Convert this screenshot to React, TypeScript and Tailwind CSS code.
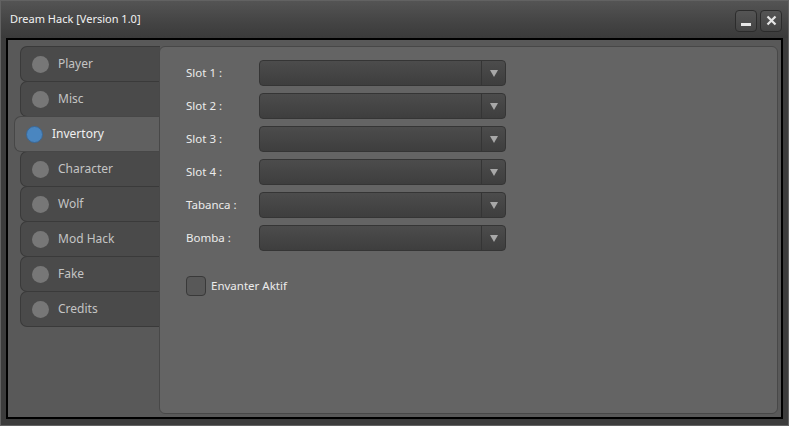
import React from "react";

const tabs = ["Player", "Misc", "Invertory", "Character", "Wolf", "Mod Hack", "Fake", "Credits"];
const slots = ["Slot 1 :", "Slot 2 :", "Slot 3 :", "Slot 4 :", "Tabanca :", "Bomba :"];

function Tab({ label, active }: { label: string; active: boolean }) {
  if (active) {
    return (
      <div className="-ml-[6px] h-[36px] -mb-px flex items-center rounded-l-[7px] border border-r-0 border-[#474747] bg-[#606060] pl-[11px] relative z-10">
        <span className="h-[17px] w-[17px] rounded-full border border-[#3b6896] bg-[#4a86c0]" />
        <span className="ml-[9px] text-[12px] text-[#f0f0f0]">{label}</span>
      </div>
    );
  }
  return (
    <div className="h-[36px] -mb-px flex items-center rounded-l-[7px] border border-r-0 border-[#3a3a3a] bg-[#4a4a4a] pl-[11px]">
      <span className="h-[17px] w-[17px] rounded-full bg-[#777777]" />
      <span className="ml-[9px] text-[12px] text-[#c4c4c4]">{label}</span>
    </div>
  );
}

function Select() {
  return (
    <div className="flex h-[26px] w-[247px] rounded-[4px] border border-[#353535] bg-gradient-to-b from-[#4c4c4c] to-[#3e3e3e]">
      <div className="flex-1" />
      <div className="flex w-[24px] items-center justify-center border-l border-[#353535]">
        <svg width="8" height="7" viewBox="0 0 8 7">
          <path d="M0 0 H8 L4 7 Z" fill="#a8a8a8" />
        </svg>
      </div>
    </div>
  );
}

export default function App() {
  return (
    <div
      className="flex h-[426px] w-[789px] flex-col border border-[#626262] bg-[#3c3c3c]"
      style={{ fontFamily: "'Noto Sans', 'DejaVu Sans', sans-serif" }}
    >
      {/* title bar */}
      <div className="flex h-[37px] items-center bg-gradient-to-b from-[#545454] via-[#464646] to-[#3a3a3a] pl-[9px] pr-[6px]">
        <span className="text-[11px] text-[#f2f2f2]">Dream Hack [Version 1.0]</span>
        <div className="ml-auto flex gap-[3px] pt-[2px]">
          <button className="flex h-[22px] w-[22px] items-center justify-center rounded-[4px] border border-[#2c2c2c] bg-gradient-to-b from-[#555555] to-[#444444]">
            <span className="mt-[7px] h-[3px] w-[10px] bg-[#e6e6e6]" />
          </button>
          <button className="flex h-[22px] w-[22px] items-center justify-center rounded-[4px] border border-[#2c2c2c] bg-gradient-to-b from-[#555555] to-[#444444]">
            <svg width="11" height="11" viewBox="0 0 11 11">
              <path d="M1.5 1.5 L9.5 9.5 M9.5 1.5 L1.5 9.5" stroke="#e6e6e6" strokeWidth="2.2" />
            </svg>
          </button>
        </div>
      </div>

      {/* window body */}
      <div className="flex-1 px-[5px] pb-[6px]">
        <div className="flex h-full border-2 border-black bg-[#595959] pb-[3px] pl-[12px] pr-[3px] pt-[6px]">
          <div className="w-[140px] shrink-0">
            {tabs.map((t) => (
              <Tab key={t} label={t} active={t === "Invertory"} />
            ))}
          </div>
          <div className="-ml-px relative z-20 flex-1 rounded-[6px] border border-[#484848] bg-[#646464] pl-[26px] pt-[13px]">
            <div className="flex flex-col gap-[7px]">
              {slots.map((s) => (
                <div key={s} className="flex items-center">
                  <span className="w-[73px] text-[11.5px] text-[#ececec]">{s}</span>
                  <Select />
                </div>
              ))}
            </div>
            <label className="mt-[25px] flex items-center">
              <span className="h-[20px] w-[20px] rounded-[4px] border border-[#393939] bg-[#585858]" />
              <span className="ml-[5px] text-[11.5px] text-[#ececec]">Envanter Aktif</span>
            </label>
          </div>
        </div>
      </div>
    </div>
  );
}
